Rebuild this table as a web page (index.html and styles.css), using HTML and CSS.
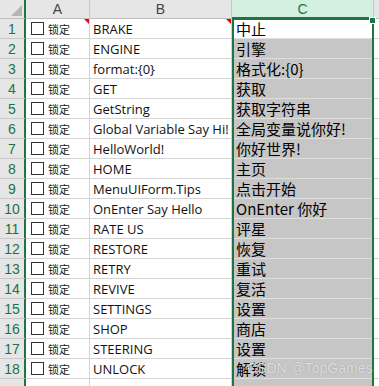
FILE: index.html
```html
<!DOCTYPE html>
<html>
<head>
<meta charset="utf-8">
<link rel="stylesheet" href="styles.css">
</head>
<body>
<div class="sheet">
  <div class="grid">
    <div class="corner"><span class="tri"></span></div>
    <div class="colh">A</div>
    <div class="colh">B</div>
    <div class="colh sel">C</div>
    <div class="colh last"></div>
  </div>
  <div class="grid rows" id="rows"></div>
  <div class="selection"><span class="handle"></span></div>
  <div class="watermark">CSDN @TopGames</div>
</div>
<script src="app.js"></script>
</body>
</html>
```
FILE: app.js
```js
const data = [
  ["BRAKE","中止"],["ENGINE","引擎"],["format:{0}","格式化:{0}"],["GET","获取"],
  ["GetString","获取字符串"],["Global Variable Say Hi!","全局变量说你好!"],["HelloWorld!","你好世界!"],
  ["HOME","主页"],["MenuUIForm.Tips","点击开始"],["OnEnter Say Hello","OnEnter 你好"],
  ["RATE US","评星"],["RESTORE","恢复"],["RETRY","重试"],["REVIVE","复活"],
  ["SETTINGS","设置"],["SHOP","商店"],["STEERING","设置"],["UNLOCK","解锁"]
];
const rows = document.getElementById('rows');
let html = '';
data.forEach((d, i) => {
  const first = i === 0;
  html += '<div class="rowh">' + (i + 1) + '</div>' +
    '<div class="cell a"><span class="box"></span><span class="lock">锁定</span>' + (first ? '<span class="note"></span>' : '') + '</div>' +
    '<div class="cell b">' + d[0] + (first ? '<span class="note"></span>' : '') + '</div>' +
    '<div class="cell c' + (first ? ' active' : '') + '">' + d[1] + '</div>' +
    '<div class="cell d"></div>';
});
html += '<div class="rowh end"></div><div class="cell a end"></div><div class="cell b end"></div><div class="cell c end"></div><div class="cell d end"></div>';
rows.innerHTML = html;
```
FILE: styles.css
```css
html, body { margin: 0; padding: 0; background: #fff; }
.sheet { position: relative; width: 379px; height: 386px; overflow: hidden; }
.grid { display: grid; grid-template-columns: 26px 64px 142px 142px 5px; }
.corner, .colh { height: 19px; box-sizing: border-box; background: #e6e6e6; border-bottom: 1px solid #bfbfbf; border-right: 1px solid #c8c8c8; }
.corner { position: relative; border-right: 2px solid #217346; border-bottom-color: #bfbfbf; }
.tri { position: absolute; right: 2px; bottom: 2px; width: 0; height: 0; border-left: 11px solid transparent; border-bottom: 11px solid #b5b5b5; }
.colh { font-family: "Liberation Sans", Arial, sans-serif; font-size: 14px; color: #444; display: flex; align-items: center; justify-content: center; }
.colh.sel { background: #d3f0e0; color: #217346; border-bottom: 2px solid #217346; }
.colh.last { border-right: none; }
.rowh { height: 20px; box-sizing: border-box; background: #e6e6e6; border-bottom: 1px solid #c8c8c8; border-right: 2px solid #217346; color: #217346; font-family: "Liberation Sans", Arial, sans-serif; font-size: 14px; display: flex; align-items: center; justify-content: center; }
.cell { position: relative; height: 20px; box-sizing: border-box; border-bottom: 1px solid #d4d4d4; border-right: 1px solid #d4d4d4; display: flex; align-items: center; white-space: nowrap; overflow: visible; }
.end { height: 7px; border-bottom: none; }
.rowh.end { border-bottom: none; }
.cell.a { padding-left: 5px; }
.box { width: 11px; height: 11px; border: 1px solid #333; background: #fff; flex: none; }
.lock { margin-left: 4px; font-family: "Noto Sans CJK SC", sans-serif; font-size: 11px; color: #222; }
.cell.b { padding-left: 3px; font-family: "Open Sans", "Liberation Sans", sans-serif; font-size: 13px; color: #111; }
.cell.c { padding-left: 4px; background: #c6c6c6; border-bottom-color: #dedede; border-right: none; font-family: "Noto Sans CJK SC", sans-serif; font-size: 15px; color: #000; }
.cell.c.active { background: #fff; }
.cell.c.end { background: #c6c6c6; }
.cell.d { border-right: none; }
.note { position: absolute; right: 0; top: 0; width: 0; height: 0; border-left: 5px solid transparent; border-top: 5px solid #e00; }
.selection { position: absolute; left: 232px; top: 18px; width: 142px; height: 380px; box-sizing: border-box; border: 2px solid #217346; }
.handle { position: absolute; right: -4px; top: -3px; width: 5px; height: 5px; background: #217346; border: 1px solid #fff; }
.watermark { position: absolute; left: 247px; top: 360px; font-family: "Liberation Sans", Arial, sans-serif; font-size: 14px; color: rgba(232,232,232,0.9); text-shadow: 0 0 1px rgba(90,90,90,0.5); }
```
